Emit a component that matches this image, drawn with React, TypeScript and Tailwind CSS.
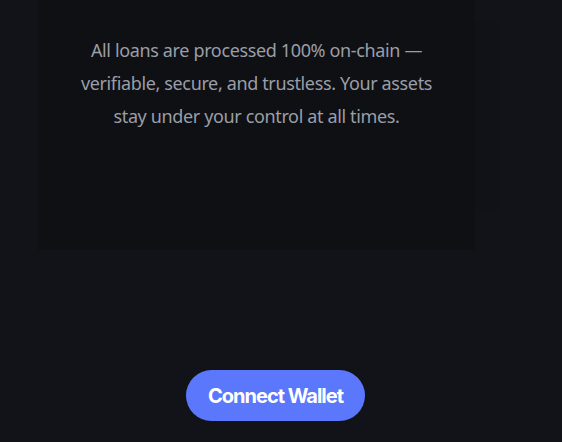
import React from "react";

export default function App() {
  return (
    <main className="min-h-screen w-full bg-[#121318] flex flex-col">
      <div className="flex">
        <section className="ml-[38px] w-[437px] h-[250px] bg-[#0f1014] flex justify-center pt-[34px]">
          <p
            className="w-[356px] text-center text-[18px] leading-[33px] tracking-[-0.02em] text-[#9a9ea8]"
            style={{ fontFamily: '"Noto Sans", "Open Sans", sans-serif' }}
          >
            All loans are processed 100% on-chain — verifiable, secure, and
            trustless. Your assets stay under your control at all times.
          </p>
        </section>
        <div className="w-[25px] mt-[20px] h-[190px] bg-[#111217]" />
      </div>
      <div className="flex pt-[120px] pl-[186px]">
        <button
          className="h-[51px] w-[179px] rounded-full bg-[#5b78fd] text-white text-[20px] font-bold tracking-[-0.05em]"
          style={{ fontFamily: "Inter, sans-serif" }}
        >
          Connect Wallet
        </button>
      </div>
    </main>
  );
}
